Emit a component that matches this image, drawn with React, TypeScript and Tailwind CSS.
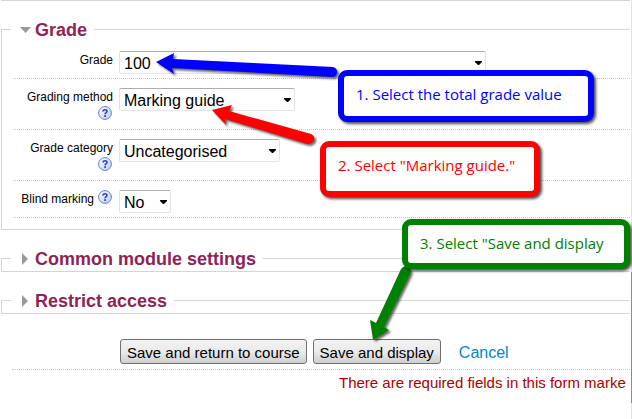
import { useState, type ReactNode } from "react";
import { clsx } from "clsx";

const gradeOptions = ["100", "50", "10"];
const methodOptions = ["Marking guide", "Simple direct grading", "Rubric"];
const categoryOptions = ["Uncategorised"];
const yesNoOptions = ["No", "Yes"];

function HelpIcon({ label }: { label: string }) {
  return (
    <button type="button" aria-label={label} className="mr-px ml-1 inline-block h-[14px] w-[14px] align-top">
      <svg viewBox="0 0 14 14" className="block h-[14px] w-[14px]">
        <defs>
          <linearGradient id="help" x1="0" y1="0" x2="1" y2="1">
            <stop offset="0" stopColor="#ffffff" />
            <stop offset="1" stopColor="#bccbee" />
          </linearGradient>
        </defs>
        <circle cx="7" cy="7" r="6.4" fill="url(#help)" stroke="#5b7fd9" strokeWidth="1" />
        <path d="M5 5.4C5 3.2 9 3.2 9 5.3C9 6.6 7.1 6.6 7.1 8.3" fill="none" stroke="#2743c4" strokeWidth="1.6" />
        <rect x="6.2" y="9.2" width="1.8" height="1.7" fill="#2743c4" />
      </svg>
    </button>
  );
}

type FieldProps = {
  id: string;
  label: string;
  options: string[];
  width: string;
  help?: boolean;
};

function SelectField({ id, label, options, width, help }: FieldProps) {
  const [value, setValue] = useState(options[0]);

  return (
    <div className="flex items-start gap-[6px] border-b border-dotted border-[#ccc] pt-[9px] pb-1">
      <div className={clsx("w-[100px] shrink-0 text-right text-xs leading-[18px]", help && "pb-px")}>
        <label htmlFor={id}>{label}</label>
        {help && <HelpIcon label={`Help with ${label}`} />}
      </div>
      <div className={clsx("relative", width)}>
        <select
          id={id}
          value={value}
          onChange={(e) => setValue(e.target.value)}
          className="block h-[23px] w-full appearance-none rounded-[2px] border border-[#e2e3ea] border-t-[#abadb3] bg-white pt-0.5 pl-1 text-base leading-5 text-black"
        >
          {options.map((option) => (
            <option key={option}>{option}</option>
          ))}
        </select>
        <svg viewBox="0 0 7 4" className="pointer-events-none absolute top-[10px] right-1 h-1 w-[7px]">
          <path d="M0 0H7V1L4 4H3L0 1Z" fill="#000" />
        </svg>
      </div>
    </div>
  );
}

function Section({ title, open, children }: { title: string; open?: boolean; children?: ReactNode }) {
  return (
    <fieldset className="mt-4 ml-px min-w-0 border-y border-l border-[#d5d5d5] pb-px">
      <legend className="ml-[9px] pr-[7px] pl-2">
        <button
          type="button"
          aria-expanded={!!open}
          className="flex h-6 items-center pt-0.5 text-lg font-bold text-[#8e2454]"
        >
          <svg viewBox="0 0 16 12" className="h-3 w-4">
            <path d={open ? "M1 3H12L6.5 9Z" : "M3 0V12L9 6Z"} fill="#999" />
          </svg>
          {title}
        </button>
      </legend>
      {children}
    </fieldset>
  );
}

function Callout({ className, children }: { className: string; children: ReactNode }) {
  return (
    <div
      className={clsx(
        "absolute rounded-[9px] border-[6px] bg-white pl-3 font-['Open_Sans',sans-serif] text-[15px] leading-9 whitespace-nowrap shadow-[2px_2px_3px_rgba(0,0,0,0.7)]",
        className
      )}
    >
      {children}
    </div>
  );
}

function Arrows() {
  return (
    <svg
      viewBox="0 0 632 419"
      className="pointer-events-none absolute top-0 left-0 h-[419px] w-[632px] drop-shadow-[2px_2px_1px_rgba(0,0,0,0.6)]"
    >
      <path d="M156 62L174 53L173 59L333 67Q337 68 337 72Q337 77 332 77L172 68L174 74Z" fill="#0000ff" />
      <path d="M212 110L232 105L229 111L311 134Q315 136 314 140Q312 144 307 144L225 119L226 125Z" fill="#ff0000" />
      <path d="M373 340L370 320L376 323L401 269Q404 265 408 267Q412 269 410 274L384 327L389 330Z" fill="#008000" />
    </svg>
  );
}

export default function App() {
  const buttonClass =
    "h-[25px] rounded-[3px] border border-[#707070] bg-linear-to-b from-[#f2f2f2] from-0% via-[#ebebeb] via-50% to-[#cfcfcf] px-[6px] pt-0.5 text-[15px] leading-5 text-black";

  return (
    <div className="relative flex overflow-hidden bg-white font-['Liberation_Sans',Arial,sans-serif] text-black">
      <form className="min-w-0 flex-1 overflow-hidden pb-6" onSubmit={(e) => e.preventDefault()}>
        <hr className="ml-px border-[#d5d5d5]" />

        <Section title="Grade" open>
          <div className="ml-[11px] pt-px pb-[10px]">
            <SelectField id="grade" label="Grade" options={gradeOptions} width="w-[367px]" />
            <SelectField id="method" label="Grading method" options={methodOptions} width="w-[176px]" help />
            <SelectField id="category" label="Grade category" options={categoryOptions} width="w-[161px]" help />
            <SelectField id="blind" label="Blind marking" options={yesNoOptions} width="w-[52px]" help />
          </div>
        </Section>
        <Section title="Common module settings" />
        <Section title="Restrict access" />

        {/* Actions */}
        <div className="mt-[25px] ml-3 flex items-center border-b border-dotted border-[#ccc] pb-[5px] pl-[108px]">
          <button type="submit" className={buttonClass}>
            Save and return to course
          </button>
          <button type="submit" className={clsx(buttonClass, "ml-[6px]")}>
            Save and display
          </button>
          <a href="#cancel" className="ml-[18px] pt-0.5 text-base leading-5 text-[#0088cc]">
            Cancel
          </a>
        </div>
        <p className="mt-px ml-[339px] text-[15px] leading-6 whitespace-nowrap text-[#aa0000]">
          There are required fields in this form marke
        </p>
      </form>

      {/* Page scrollbar */}
      <div className="flex w-[2px] flex-col border-l border-white bg-[#e3e3e3] pt-[272px]">
        <div className="h-[131px] bg-[#8c8c8c]" />
      </div>

      {/* Annotations */}
      <Arrows />
      <Callout className="top-[70px] left-[338px] h-[52px] w-[256px] border-[#0000ff] text-[#0000ff]">
        1. Select the total grade value
      </Callout>
      <Callout className="top-[141px] left-[320px] h-[56px] w-[220px] border-[#ff0000] text-[#ff0000]">
        2. Select "Marking guide."
      </Callout>
      <Callout className="top-[219px] left-[402px] h-[50px] w-[228px] border-[#008000] text-[#008000]">
        3. Select "Save and display
      </Callout>
    </div>
  );
}
